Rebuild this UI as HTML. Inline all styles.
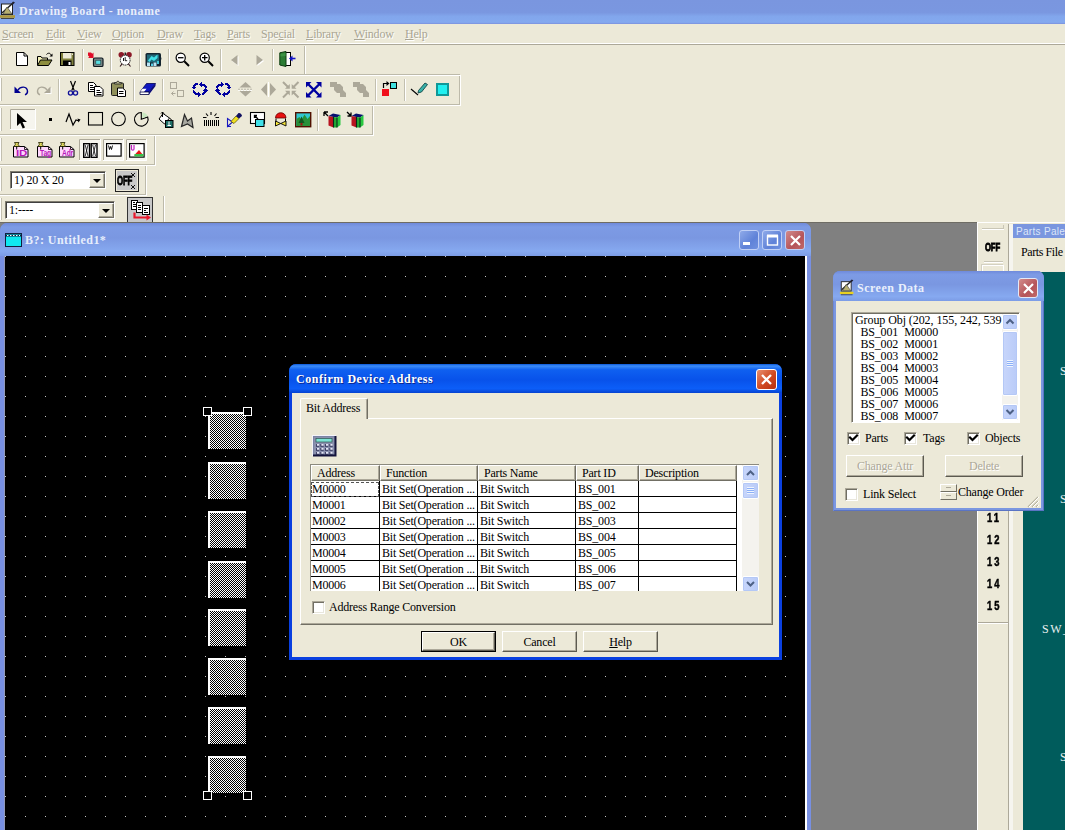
<!DOCTYPE html>
<html><head><meta charset="utf-8">
<style>
*{box-sizing:border-box;margin:0;padding:0}
html,body{width:1065px;height:830px;overflow:hidden;background:#ECE9D8;font-family:"Liberation Serif",serif;font-size:12px;color:#000;letter-spacing:-.2px}
.a{position:absolute}
#title{left:0;top:0;width:1065px;height:24px;background:linear-gradient(#7A96DF 0%,#7A97E0 52%,#82A6EC 68%,#84A9EF 93%,#7C90DC 100%)}
#title span{position:absolute;left:19px;top:4px;font-weight:bold;font-size:12px;color:#E8EEFB;letter-spacing:.5px;white-space:nowrap}
#menu{left:0;top:24px;width:1065px;height:20px;background:#ECE9D8}
#menu span{position:absolute;top:3px;font-size:12px;color:#A9A593;text-shadow:1px 1px 0 #fff;white-space:nowrap}
#menu u{text-decoration-thickness:1px;text-underline-offset:1px}
.tb{background:#ECE9D8;border-right:1px solid #C5C2B2;border-bottom:1px solid #C5C2B2;box-shadow:1px 1px 0 #fff}
.grip{position:absolute;left:0;top:2px;width:2px;bottom:3px;border-left:1px solid #fff;border-right:1px solid #ACA899}
.sep{position:absolute;width:2px;border-left:1px solid #ACA899;border-right:1px solid #fff}
.ic{position:absolute;width:16px;height:16px}
.combo{background:#fff;border:1px solid #7F7C6F;border-right-color:#fff;border-bottom-color:#fff;box-shadow:inset 1px 1px 0 #404040}
.cbtn{position:absolute;right:0;top:1px;bottom:0;width:16px;background:#ECE9D8;border:1px solid #fff;border-right-color:#716F64;border-bottom-color:#716F64;box-shadow:inset -1px -1px 0 #ACA899}
.cbtn:after{content:"";position:absolute;left:3px;top:5px;border:4px solid transparent;border-top:4px solid #000;border-bottom:0}
#mdi{left:0;top:222px;width:978px;height:608px;background:#808080;box-shadow:inset 0 1px 0 #6E6C64}
#child{left:0;top:223px;width:811px;height:607px;overflow:hidden;background:#7890E2;border-radius:7px 7px 0 0}
#ctitle{left:0;top:0;width:811px;height:33px;border-radius:7px 7px 0 0;background:linear-gradient(#6F8ADB 0,#7D9BE5 12%,#7A97E1 45%,#86A9F0 85%,#7C9CE6 100%)}
#ctitle span{position:absolute;left:25px;top:10px;font-weight:bold;font-size:12px;color:#E6EEFC;letter-spacing:.45px;white-space:nowrap}
#canvas{left:5px;top:33px;width:800px;height:600px;background-color:#000;
background-image:radial-gradient(circle at 0.5px 0.5px,#c4c4c4 0,#c4c4c4 0.5px,transparent 1px);background-size:20px 20px;background-position:0px 0px}
.cond{font-family:"Liberation Sans",sans-serif;font-weight:bold;font-size:12px;transform:scaleX(.78);transform-origin:0 0;-webkit-text-stroke:.5px #000;white-space:nowrap}
.num{letter-spacing:2.500px}
.wbtn{position:absolute;width:20px;height:20px;border-radius:3px;border:1px solid #C0D0F6}
.blueb{background:linear-gradient(135deg,#8FAAE9,#5F82D8 60%,#6F91E0)}
.redb{background:linear-gradient(135deg,#D28B8B,#B5545A 60%,#C06868)}
.box{position:absolute;width:38px;height:37px;border-left:2px solid #fff;border-top:2px solid #fff;
background-image:conic-gradient(#fff 25%,#000 0 50%,#fff 0 75%,#000 0);background-size:2px 2px;background-color:#888}
.hdl{position:absolute;width:9px;height:9px;border:1px solid #fff;background:#000}

.lb{font-size:12px;white-space:nowrap}
.chk{position:absolute;width:13px;height:13px;background:#fff;border:1px solid #ACA899;border-right-color:#fff;border-bottom-color:#fff;box-shadow:inset 1px 1px 0 #716F64,inset -1px -1px 0 #E8E6DC}
.btn{position:absolute;background:#ECE9D8;border:1px solid #fff;border-right-color:#5C5A50;border-bottom-color:#5C5A50;box-shadow:inset -1px -1px 0 #ACA899;font-size:12px;text-align:center}
.btn span{position:absolute;left:0;right:0;top:3px}
.btn.dis{color:#ACA899;text-shadow:1px 1px 0 #fff}
.btn.def{outline:1px solid #000}
.btn.def span{top:2px}
.sbar{position:absolute;background:#F4F3EE}
.sbtn{position:absolute;left:0;width:16px;height:16px;background:linear-gradient(90deg,#C8D6FB,#B9CBF8);border:1px solid #fff;border-radius:2px;box-shadow:inset 0 0 0 1px #B4C8F6}
.sbtn svg{position:absolute;left:0;top:0}
.sthumb{position:absolute;left:0;width:16px;background:linear-gradient(90deg,#C8D6FB,#B9CBF8);border:1px solid #fff;border-radius:2px;box-shadow:inset 0 0 0 1px #B4C8F6}
.sthumb i{position:absolute;left:4px;right:4px;top:50%;margin-top:-4px;height:7px;background:repeating-linear-gradient(#EEF4FE 0 1px,#8CB0F8 1px 2px)}
.hc{position:absolute;top:0;height:16px;background:#ECE9D8;border:1px solid #fff;border-right-color:#716F64;border-bottom-color:#716F64;box-shadow:inset -1px -1px 0 #ACA899;font-size:12px}
.hc span{position:absolute;left:5px;top:0px;white-space:nowrap}
.rw{position:absolute;left:0;width:426px;height:16px;border-bottom:1px solid #000;font-size:12px}
.rw span{position:absolute;top:1px;white-space:nowrap}
</style></head><body>
<div class="a" id="title"><span>Drawing Board - noname</span></div>
<div class="a" id="menu">
<span style="left:2px"><u>S</u>creen</span><span style="left:46px"><u>E</u>dit</span><span style="left:77px"><u>V</u>iew</span><span style="left:112px"><u>O</u>ption</span><span style="left:157px"><u>D</u>raw</span><span style="left:194px"><u>T</u>ags</span><span style="left:227px"><u>P</u>arts</span><span style="left:261px">Spe<u>c</u>ial</span><span style="left:306px"><u>L</u>ibrary</span><span style="left:354px"><u>W</u>indow</span><span style="left:405px"><u>H</u>elp</span>
</div>
<div class="a" style="left:0;top:43px;width:1065px;height:2px;border-top:1px solid #fff;border-bottom:1px solid #ACA899"></div>
<svg class="a" style="left:0;top:0" width="480" height="226" viewBox="0 0 480 226"><path d="M0 74.5h305" stroke="#BDBAAA"/><path d="M0 75.5h306" stroke="#fff"/><path d="M304.5 46v29" stroke="#BDBAAA"/><path d="M305.5 46v30" stroke="#fff"/><path d="M.5 48v23" stroke="#fff"/><path d="M1.500 48v23" stroke="#C2BFAF"/><g transform="translate(16,52)"><path d="M.5 .5h7.5l3.5 3.5v9.5h-11z" fill="#fff" stroke="#000"/><path d="M8 .5v3.5h3.5" fill="none" stroke="#000"/></g><g transform="translate(37,52)"><path d="M.5 13v-8.5h3.5l1 1.5h5.5v2" fill="#F4F1B8" stroke="#000"/><path d="M.5 13.5l3-5.5h11.5l-3.5 5.5z" fill="#8E8E3E" stroke="#000"/><path d="M9.5 2.500c1.500-2 4-1.500 4.500 .5" stroke="#000" fill="none"/><path d="M15.500 1.500v3h-3z" fill="#000"/></g><g transform="translate(60,52)"><rect x=".5" y=".5" width="13.500" height="13" fill="#80803E" stroke="#000"/><rect x="3" y="1" width="8.500" height="5.500" fill="#ECE9D8"/><rect x="3" y="8.500" width="8.500" height="5" fill="#000"/><rect x="8.500" y="10" width="2" height="3" fill="#fff"/><rect x="12" y="1.500" width="1" height="1.500" fill="#ECE9D8"/></g><g transform="translate(88,52)"><path d="M0 .5h3l1.300 1.300L5.500 .5v5.500h-5.500l1.300-1.300L0 3.500z" fill="#E00C28"/><rect x="5.500" y="6" width="9.500" height="8.500" rx="1.300" fill="#788888" stroke="#101820" stroke-width="1.200"/><rect x="7.800" y="8.200" width="5" height="4" fill="#58E0E4" stroke="#203838" stroke-width=".6"/></g><g transform="translate(117,51)"><circle cx="4.300" cy="3.800" r="2.800" fill="#8C1828"/><circle cx="12" cy="3.800" r="2.800" fill="#8C1828"/><circle cx="8.200" cy="9.200" r="4.900" fill="#fff" stroke="#222" stroke-width="1" stroke-dasharray="1.500 .6"/><path d="M8.200 6.200v3.500h2M6.500 7v3" stroke="#000" fill="none" stroke-width=".9"/><path d="M3 15.500l2.300-2.800M13.500 15.500l-2.300-2.800" stroke="#301018" fill="none" stroke-width="1.100"/><path d="M7.500 1.500h1.500v2.500h-1.500z" fill="#222"/></g><g transform="translate(145,52)"><rect x=".5" y="1" width="15.500" height="13.500" rx="1.500" fill="#142430"/><rect x="2" y="2.500" width="12" height="8" fill="#206878"/><path d="M3 8.500l3.500-4.500 2.500 1.500 3.500-3v3.500l-3.500 3-2.500-1.500-2 2.500z" fill="#40E0E8"/><path d="M14.500 4.500c1.800 0 1.800 4 0 4" stroke="#142430" stroke-width="1.200" fill="none"/><rect x="2" y="10.500" width="3" height="3.500" fill="#B8E4F4"/><rect x="6" y="11.500" width="2" height="2.500" fill="#58D0E8"/><rect x="8.500" y="10.500" width="3" height="3.500" fill="#B8E4F4"/><rect x="12" y="9" width="2" height="3" fill="#40C8D8"/></g><g transform="translate(175,52)"><circle cx="5.700" cy="5.700" r="4.600" fill="#fff" stroke="#000" stroke-width="1.200"/><path d="M3 5.700h5.500" stroke="#000" stroke-width="1.300"/><path d="M9.300 9.300l4.700 4.700" stroke="#000" stroke-width="2"/></g><g transform="translate(199,52)"><circle cx="5.700" cy="5.700" r="4.600" fill="#fff" stroke="#000" stroke-width="1.200"/><path d="M3 5.700h5.500M5.700 3v5.500" stroke="#000" stroke-width="1.300"/><path d="M9.300 9.300l4.700 4.700" stroke="#000" stroke-width="2"/></g><g transform="translate(229,53)"><path d="M8.500 2v10L2 7z" fill="#fff" transform="translate(1,1)"/><path d="M8.500 2v10L2 7z" fill="#ACA899"/></g><g transform="translate(256,53)"><path d="M.5 2v10L7 7z" fill="#fff" transform="translate(1,1)"/><path d="M.5 2v10L7 7z" fill="#ACA899"/></g><g transform="translate(279,51)"><rect x="5.500" y="1.500" width="6" height="13" fill="#fff" stroke="#000"/><path d="M.8 1.800l6.200-1.300v15l-6.200-1.500z" fill="#2C7C34" stroke="#0c3c10"/><path d="M1.500 3l5-1v3l-5 .5z" fill="#3c9444"/><path d="M16.500 7.500h-4.500" stroke="#1414C8" stroke-width="1.600"/><path d="M13.500 4.500l-3.500 3 3.500 3z" fill="#1414C8"/></g><path d="M82.5 49v22" stroke="#C2BFAF"/><path d="M83.5 49v22" stroke="#fff"/><path d="M110.5 49v22" stroke="#C2BFAF"/><path d="M111.5 49v22" stroke="#fff"/><path d="M139.5 49v22" stroke="#C2BFAF"/><path d="M140.5 49v22" stroke="#fff"/><path d="M168.5 49v22" stroke="#C2BFAF"/><path d="M169.5 49v22" stroke="#fff"/><path d="M220.5 49v22" stroke="#C2BFAF"/><path d="M221.5 49v22" stroke="#fff"/><path d="M272.5 49v22" stroke="#C2BFAF"/><path d="M273.5 49v22" stroke="#fff"/><path d="M0 104.5h460" stroke="#BDBAAA"/><path d="M0 105.5h461" stroke="#fff"/><path d="M459.5 76v29" stroke="#BDBAAA"/><path d="M460.5 76v30" stroke="#fff"/><path d="M.5 78v23" stroke="#fff"/><path d="M1.500 78v23" stroke="#C2BFAF"/><path d="M305 74.500h155" stroke="#BDBAAA"/><path d="M306 75.500h155" stroke="#fff"/><g transform="translate(14,84)"><path d="M.5 2.500v6.500h6.500z" fill="#000090"/><path d="M4 6c2.500-4 9-4 9.500 1 .2 2-1 3.200-2.500 3.800" stroke="#000090" stroke-width="1.400" fill="none"/></g><g transform="translate(37,84)"><g transform="translate(14,0) scale(-1,1)"><path d="M.5 2.500v6.500h6.500z" fill="#fff" transform="translate(-1,1)"/><path d="M.5 2.500v6.500h6.500z" fill="#ACA899"/><path d="M4 6c2.500-4 9-4 9.500 1 .2 2-1 3.200-2.500 3.800" stroke="#ACA899" stroke-width="1.400" fill="none"/></g></g><g transform="translate(68,81)"><path d="M2.500 0l3.700 9.500M7.500 0l-3.700 9.500" stroke="#000" stroke-width="1.200" fill="none"/><circle cx="2.500" cy="12" r="2.100" fill="none" stroke="#101098" stroke-width="1.300"/><circle cx="7.500" cy="12" r="2.100" fill="none" stroke="#101098" stroke-width="1.300"/></g><g transform="translate(88,82)"><path d="M.5 .5h5l2.500 2.500v6.500h-7.500z" fill="#fff" stroke="#000"/><path d="M2 3.500h3M2 5.500h4.500M2 7.500h4.500" stroke="#000"/><path d="M6.500 4.500h5.500l3 3v6.500h-8.500z" fill="#fff" stroke="#000"/><path d="M8.500 8.500h3.500M8.500 10.500h5M8.500 12.500h5" stroke="#000"/></g><g transform="translate(111,81)"><rect x=".5" y="2" width="12" height="12.500" rx="1" fill="#90905a" stroke="#222"/><path d="M3.500 3v-1.500h2l.7-1.200h1.400l.7 1.200h2v1.500z" fill="#b8b890" stroke="#222" stroke-width=".8"/><path d="M6.500 7h5l3 2.500v6h-8z" fill="#fff" stroke="#000"/><path d="M8 10.500h4.500M8 12.500h4.500" stroke="#000"/></g><g transform="translate(140,83)"><path d="M6.500 .5h9l-6.500 8.500h-9z" fill="#1018C0" stroke="#000050" stroke-width=".8"/><path d="M0 9l2.500-3.300h4l-2.500 3.300z" fill="#fff"/><path d="M0 9h9v2.500h-9z" fill="#fff" stroke="#000040" stroke-width=".8"/><path d="M9 11.500l6.500-8.500v-2.500l-6.500 8.500z" fill="#080878"/></g><g transform="translate(170,82)"><rect x=".5" y=".5" width="6" height="6" fill="none" stroke="#ACA899"/><rect x="7.500" y="8.500" width="6" height="6" fill="none" stroke="#ACA899"/><path d="M5.500 11.500h-4M3.500 9.500l-2 2 2 2" fill="none" stroke="#ACA899"/></g><g transform="translate(192,82)"><path d="M9 0h1v1h-1zM3 1h3v1h-3zM8 1h2v1h-2zM2 2h4v1h-4zM7 2h6v1h-6zM1 3h3v1h-3zM8 3h6v1h-6zM1 4h2v1h-2zM9 4h1v1h-1zM12 4h3v1h-3zM0 5h4v1h-4zM13 5h2v1h-2zM1 6h2v1h-2zM13 6h1v1h-1zM12 7h3v1h-3zM1 8h1v1h-1zM11 8h5v1h-5zM1 9h2v1h-2zM12 9h3v1h-3zM1 10h3v1h-3zM6 10h1v1h-1zM11 10h3v1h-3zM2 11h6v1h-6zM10 11h3v1h-3zM3 12h6v1h-6zM10 12h2v1h-2zM6 13h2v1h-2zM6 14h1v1h-1z" fill="#0000A0" shape-rendering="crispEdges"/></g><g transform="translate(215,82)"><g transform="translate(16,0) scale(-1,1)"><path d="M9 0h1v1h-1zM3 1h3v1h-3zM8 1h2v1h-2zM2 2h4v1h-4zM7 2h6v1h-6zM1 3h3v1h-3zM8 3h6v1h-6zM1 4h2v1h-2zM9 4h1v1h-1zM12 4h3v1h-3zM0 5h4v1h-4zM13 5h2v1h-2zM1 6h2v1h-2zM13 6h1v1h-1zM12 7h3v1h-3zM1 8h1v1h-1zM11 8h5v1h-5zM1 9h2v1h-2zM12 9h3v1h-3zM1 10h3v1h-3zM6 10h1v1h-1zM11 10h3v1h-3zM2 11h6v1h-6zM10 11h3v1h-3zM3 12h6v1h-6zM10 12h2v1h-2zM6 13h2v1h-2zM6 14h1v1h-1z" fill="#0000A0" shape-rendering="crispEdges"/></g></g><g transform="translate(238,82)"><path d="M7.500 0l6 5.500h-12z" fill="#ACA899"/><path d="M7.500 14.500l6-5.500h-12z" fill="#ACA899"/><path d="M0 7.300h15" stroke="#ACA899" stroke-dasharray="2 1"/><path d="M0 8.300h15" stroke="#fff" stroke-dasharray="2 1"/></g><g transform="translate(261,82)"><path d="M0 7.500l6-6.500v13z" fill="#ACA899"/><path d="M15 7.500l-6-6.500v13z" fill="#ACA899"/><path d="M7.500 0v15" stroke="#fff"/></g><g transform="translate(283,82)"><g stroke="#ACA899" stroke-width="2" fill="none"><path d="M0 0l5.500 5.500M15.500 0l-5.500 5.500M0 15.500l5.500-5.500M15.500 15.500l-5.500-5.500"/></g><g fill="#ACA899"><path d="M6.800 2v4.800h-4.800z"/><path d="M8.700 2v4.800h4.800z"/><path d="M6.800 13.500v-4.800h-4.800z"/><path d="M8.700 13.500v-4.800h4.800z"/></g></g><g transform="translate(306,82)"><g stroke="#0000A0" stroke-width="2.400" fill="none"><path d="M2 2l11.500 11.500M13.500 2l-11.500 11.500"/></g><g fill="#0000A0"><path d="M0 0h5.500l-5.500 5.500z"/><path d="M15.500 0h-5.500l5.500 5.500z"/><path d="M0 15.500h5.500l-5.500-5.500z"/><path d="M15.500 15.500h-5.500l5.500-5.500z"/></g></g><g transform="translate(330,82)"><path d="M0 0h7v2h3l3 3v3l3 3v4h-6v-4h-3l-3-3v-3h-4z" fill="#ACA899"/></g><g transform="translate(353,82)"><path d="M0 0h7v2h3l3 3v3l3 3v4h-6v-4h-3l-3-3v-3h-4z" fill="#ACA899"/></g><g transform="translate(382,81)"><rect x="0" y="8" width="7" height="7" fill="#F0101C"/><rect x="8.500" y="1.500" width="6" height="6" fill="#40E0E0" stroke="#000"/><path d="M1.500 7v-4.500h4" stroke="#000" stroke-width="1.200" fill="none"/><path d="M4.500 0l3 2.500-3 2.500z" fill="#000"/></g><g transform="translate(411,82)"><path d="M0 7l7 6" stroke="#000" stroke-width="1.100"/><path d="M7.500 8.500l6.500-7.500 2.500 1.500-6 7.500-3.500 1z" fill="#38B0A8" stroke="#104848" stroke-width=".9"/></g><g transform="translate(436,83)"><rect x="1" y="1" width="11" height="11" fill="#20F0F0" stroke="#109898" stroke-width="2"/></g><path d="M58.5 79v22" stroke="#C2BFAF"/><path d="M59.5 79v22" stroke="#fff"/><path d="M133.5 79v22" stroke="#C2BFAF"/><path d="M134.5 79v22" stroke="#fff"/><path d="M162.5 79v22" stroke="#C2BFAF"/><path d="M163.5 79v22" stroke="#fff"/><path d="M375.5 79v22" stroke="#C2BFAF"/><path d="M376.5 79v22" stroke="#fff"/><path d="M404.5 79v22" stroke="#C2BFAF"/><path d="M405.5 79v22" stroke="#fff"/><path d="M0 134.5h373" stroke="#BDBAAA"/><path d="M0 135.5h374" stroke="#fff"/><path d="M372.5 106v29" stroke="#BDBAAA"/><path d="M373.5 106v30" stroke="#fff"/><path d="M.5 108v23" stroke="#fff"/><path d="M1.500 108v23" stroke="#C2BFAF"/><rect x="10" y="109" width="26" height="21" fill="#F6F5EE"/><path d="M10.5 130v-20.5h25.5" fill="none" stroke="#ACA899"/><path d="M35.5 109v20.5h-25.5" fill="none" stroke="#fff"/><g transform="translate(17,113)"><path d="M0 0v13l3.200-3 2.500 5.500 2.300-1-2.500-5.500h4.500z" fill="#000"/></g><g transform="translate(49,118)"><rect x="0" y="0" width="3" height="3" fill="#000"/></g><g transform="translate(66,113)"><path d="M0 9l3-8 4 11 3-5 3 1" fill="none" stroke="#000" stroke-width="1.200"/><path d="M11.500 5.500l3 1-2 3z" fill="#000"/></g><g transform="translate(88,112)"><rect x=".5" y=".5" width="14" height="12.500" fill="none" stroke="#000" stroke-width="1.100"/></g><g transform="translate(111,112)"><circle cx="7.500" cy="7" r="6.800" fill="none" stroke="#000" stroke-width="1.100"/></g><g transform="translate(134,112)"><path d="M7.300 7.300v-6.800a6.800 6.800 0 1 0 6.400 4.500z" fill="none" stroke="#000" stroke-width="1.100"/><path d="M8.300 6.300v-5.800a6 6 0 0 1 5.400 3.500z" fill="#c8e8c0"/></g><g transform="translate(159,112)"><path d="M4 1.500l-4 5.500 5.500 5 5-6z" fill="#fff" stroke="#000"/><path d="M3.500 0v5M2 1.500l1.500-1.500 1.500 1.500" stroke="#000" fill="none"/><path d="M10.500 6c2 1 2.500 3 2.500 5" stroke="#000" fill="none"/><rect x="6.500" y="8.500" width="7.500" height="7" fill="#207068" stroke="#000"/><path d="M10 9.500v4M8.500 13.500h3.500" stroke="#fff"/></g><g transform="translate(180,113)"><path d="M1.500 13.500l3-12 3 6.500 4-3 1.500 9.500-5.500-3.500z" fill="#A8A8A0" stroke="#282828" stroke-width="1.200"/></g><g transform="translate(203,112)"><path d="M8 0v3M3 1.500l2 2.500M13.500 1.500l-2 2.500M0 5.500h3.500M12.500 5.500h3.500" stroke="#000" stroke-width="1.100"/><path d="M1.500 8v6M3.500 8v6M5.500 8v6M7.500 8v6M9.500 8v6M11.500 8v6M13.500 8v6M15.500 8v6" stroke="#000" stroke-width="1"/></g><g transform="translate(226,112)"><path d="M1.500 14.500v-8l5 3.500z" fill="none" stroke="#1818C0" stroke-width="1.100"/><path d="M1 14.500h4" stroke="#1818C0"/><path d="M5 9.500l5-5.500 3 2.500-5 5z" fill="#F0E020" stroke="#504800" stroke-width=".7"/><path d="M10 4l2.500-3c1.500-.5 3.500 1 3.500 3l-3 2.500z" fill="#101060"/></g><g transform="translate(250,112)"><rect x=".5" y=".5" width="14" height="11" fill="#fff" stroke="#000" stroke-width="1.100"/><rect x="5.500" y="7.500" width="8.500" height="7" fill="#40E0E8" stroke="#000"/><path d="M4.500 3.500l3.500 3.500M4.500 6v-2.500h2.500" stroke="#000" stroke-width="1.300" fill="none"/></g><g transform="translate(275,112)"><path d="M.5 6c0-7 10.500-7 10.500 0z" fill="#E81010" stroke="#600" stroke-width=".8"/><path d="M1 6.500v3M10.500 6.500v3" stroke="#000"/><path d="M.5 9l5.200 2.500-5.200 2.500zM11 9l-5.200 2.500 5.200 2.500z" fill="#F8E838" stroke="#000" stroke-width=".9"/></g><g transform="translate(295,112)"><rect x=".7" y=".7" width="15" height="14" fill="#30C8D0" stroke="#501000" stroke-width="1.400"/><path d="M1.500 14v-7l3-2 2 3 3-5.500 3 4.500 2.500-3v10z" fill="#289038"/><path d="M6.500 4.500l-3 6.500h6z" fill="#105820"/><rect x="5.500" y="11" width="2" height="2.500" fill="#a01010"/></g><g transform="translate(324,112)"><path d="M0 0h4M0 0v4M0 0l4 4" stroke="#000" stroke-width="1.300" fill="none"/><path d="M4.500 4l4.500-2.500 7.500 1.500-3.500 2.500-3.500-.5z" fill="#081070"/><path d="M4.500 4l5 1v10.500l-5-2z" fill="#B81420"/><path d="M9.500 5l3.500 .5v10h-3.500z" fill="#20A834"/><path d="M13 5.500l3.500-2.500v10l-3.500 2.500z" fill="#28C840"/><path d="M9.500 5v10.500M13 5.500v10" stroke="#082818" stroke-width="1.100"/></g><g transform="translate(347,112)"><path d="M0 0l4 4M4 .5v3.500h-3.500" stroke="#000" stroke-width="1.300" fill="none"/><path d="M4.500 4l4.500-2.500 7.500 1.500-3.500 2.500-3.500-.5z" fill="#081070"/><path d="M4.500 4l5 1v10.500l-5-2z" fill="#B81420"/><path d="M9.500 5l3.500 .5v10h-3.500z" fill="#20A834"/><path d="M13 5.500l3.500-2.500v10l-3.500 2.500z" fill="#28C840"/><path d="M9.500 5v10.500M13 5.500v10" stroke="#082818" stroke-width="1.100"/></g><path d="M317.5 109v22" stroke="#C2BFAF"/><path d="M318.5 109v22" stroke="#fff"/><path d="M0 164.5h155" stroke="#BDBAAA"/><path d="M0 165.5h156" stroke="#fff"/><path d="M154.5 136v29" stroke="#BDBAAA"/><path d="M155.5 136v30" stroke="#fff"/><path d="M.5 138v23" stroke="#fff"/><path d="M1.500 138v23" stroke="#C2BFAF"/><rect x="79" y="139" width="22" height="22" fill="#F6F5EE"/><path d="M79.5 161v-21.5h21.5" fill="none" stroke="#ACA899"/><path d="M100.5 139v21.5h-21.5" fill="none" stroke="#fff"/><rect x="103" y="139" width="21" height="22" fill="#F6F5EE"/><path d="M103.5 161v-21.5h20.5" fill="none" stroke="#ACA899"/><path d="M123.5 139v21.5h-20.5" fill="none" stroke="#fff"/><rect x="126" y="139" width="21" height="22" fill="#F6F5EE"/><path d="M126.5 161v-21.5h20.5" fill="none" stroke="#ACA899"/><path d="M146.5 139v21.5h-20.5" fill="none" stroke="#fff"/><g transform="translate(13,142)"><path d="M.5 4.500h11l3.500 3v7.500h-14.500z" fill="#FFD8FF" stroke="#000"/><path d="M11.500 4.500v3h3.500" fill="none" stroke="#000" stroke-width=".8"/><path d="M1.500 .5h4.500l-1 1.700 1.500 2.300h-5.500l1.500-2.300z" fill="#E0D860" stroke="#202000" stroke-width=".8"/><path d="M3.700 4.500v3" stroke="#000"/><text x="3" y="13.600" font-family="Liberation Sans" font-weight="bold" font-size="8.500" fill="#B818B8" textLength="11" lengthAdjust="spacingAndGlyphs">ID</text></g><g transform="translate(37,142)"><path d="M.5 4.500h11l3.500 3v7.500h-14.500z" fill="#FFD8FF" stroke="#000"/><path d="M11.500 4.500v3h3.500" fill="none" stroke="#000" stroke-width=".8"/><path d="M1.500 .5h4.500l-1 1.700 1.500 2.300h-5.500l1.500-2.300z" fill="#E0D860" stroke="#202000" stroke-width=".8"/><path d="M3.700 4.500v3" stroke="#000"/><text x="3" y="13.600" font-family="Liberation Sans" font-weight="bold" font-size="8.500" fill="#B818B8" textLength="11" lengthAdjust="spacingAndGlyphs">Tag</text></g><g transform="translate(59,142)"><path d="M.5 4.500h11l3.500 3v7.500h-14.500z" fill="#FFD8FF" stroke="#000"/><path d="M11.500 4.500v3h3.500" fill="none" stroke="#000" stroke-width=".8"/><path d="M1.500 .5h4.500l-1 1.700 1.500 2.300h-5.500l1.500-2.300z" fill="#E0D860" stroke="#202000" stroke-width=".8"/><path d="M3.700 4.500v3" stroke="#000"/><text x="3" y="13.600" font-family="Liberation Sans" font-weight="bold" font-size="8.500" fill="#B818B8" textLength="11" lengthAdjust="spacingAndGlyphs">Adr</text></g><g transform="translate(83,143)"><rect x=".7" y=".7" width="5.800" height="13.600" fill="#fff" stroke="#000" stroke-width="1.400"/><rect x="8.200" y=".7" width="5.800" height="13.600" fill="#fff" stroke="#000" stroke-width="1.400"/><path d="M2.200 2l2.800 11M5 2l-2.800 11M9.700 2l2.800 11M12.500 2l-2.800 11" stroke="#000" stroke-width=".8"/></g><g transform="translate(106,143)"><rect x=".6" y=".6" width="14.500" height="12.500" fill="#fff" stroke="#000" stroke-width="1.200"/><path d="M2.500 2.500l1 4 1-3 1 3 1-4" stroke="#000" stroke-width=".9" fill="none"/></g><g transform="translate(129,143)"><rect x=".6" y=".6" width="14.500" height="13.500" fill="#fff" stroke="#000" stroke-width="1.200"/><path d="M2.500 2v4c0 1.500 2.500 1.500 2.500 0v-4" stroke="#C020C0" stroke-width="1.200" fill="none"/><path d="M5 12.500l5-5.500 4.500 5.500z" fill="#E81818"/><rect x="5.500" y="11" width="9" height="2.500" fill="#38C048"/></g><path d="M0 194.5h146" stroke="#BDBAAA"/><path d="M0 195.5h147" stroke="#fff"/><path d="M145.5 166v29" stroke="#BDBAAA"/><path d="M146.5 166v30" stroke="#fff"/><path d="M.5 168v23" stroke="#fff"/><path d="M1.500 168v23" stroke="#C2BFAF"/><path d="M0 222.5h164" stroke="#BDBAAA"/><path d="M0 223.5h165" stroke="#fff"/><path d="M163.5 196v27" stroke="#BDBAAA"/><path d="M164.5 196v28" stroke="#fff"/><path d="M.5 198v22" stroke="#fff"/><path d="M1.500 198v22" stroke="#C2BFAF"/></svg><svg class="a" style="left:0;top:1px" width="18" height="20" viewBox="0 0 18 20"><rect x="1.500" y="3" width="11" height="10.500" fill="#fff" stroke="#222"/><path d="M2 12l11-10" stroke="#222" stroke-width="1.600"/><path d="M3 13l4-7 5 7z" fill="#b8b070" stroke="#444" stroke-width=".7"/><path d="M13 .5l2 1-2 2-1.500-1z" fill="#223"/><path d="M0 15.500h15" stroke="#b09838" stroke-width="2.600"/><path d="M1 17.500h13" stroke="#444" stroke-width="1"/></svg>
<div class="a combo" style="left:10px;top:171px;width:96px;height:18px"><span class="a" style="left:3px;top:1px;font-size:12px;white-space:nowrap">1) 20 X 20</span><div class="cbtn"></div></div>
<div class="a" style="left:115px;top:169px;width:24px;height:23px;border:1px solid #222;background:#ECE9D8"><div class="a" style="left:1px;top:1px;right:1px;bottom:1px;background:#C8C8C8"></div><span class="a" style="left:1px;top:4px;font-family:'Liberation Sans',sans-serif;font-weight:bold;font-size:12px;transform:scaleX(.66);transform-origin:0 0;letter-spacing:-.3px;-webkit-text-stroke:.8px #000">OFF</span><svg class="a" style="left:14px;top:2px" width="6" height="18"><path d="M1 1l2 2-2 2M5 1l-2 2 2 2M1 13l2 2-2 2M5 13l-2 2 2 2" stroke="#000" fill="none" stroke-width=".9"/></svg></div>
<div class="a combo" style="left:5px;top:201px;width:110px;height:18px"><span class="a" style="left:3px;top:1px;font-size:12px;white-space:nowrap">1:----</span><div class="cbtn"></div></div>
<div class="a" style="left:127px;top:197px;width:26px;height:26px;border:1px solid #333;background:#C8C8C8;overflow:hidden"><svg class="a" style="left:1px;top:0px" width="24" height="24" viewBox="0 0 24 24"><rect x="2.500" y="2.500" width="6" height="9" fill="#fff" stroke="#000"/><rect x="7.500" y="4.500" width="6" height="10" fill="#fff" stroke="#000"/><rect x="13.500" y="7.500" width="7" height="9" fill="#fff" stroke="#000"/><path d="M4 4.500h2M4 6.500h3M4 8.500h3M9 7.500h3M9 9.500h3M9 11.500h3M15 10.500h4M15 12.500h2M15 14.500h4" stroke="#000" stroke-width="1"/><path d="M5.500 14.500v5h13" stroke="#E8182C" stroke-width="2.200" fill="none"/><path d="M17.500 16.500l4.500 3-4.500 3z" fill="#E8182C"/></svg></div>

<div class="a" id="mdi"></div>
<div class="a" style="left:977px;top:222px;width:88px;height:608px;background:#ECE9D8"></div>
<div class="a" style="left:977px;top:222px;width:1px;height:608px;background:#fff"></div>
<div class="a" style="left:978px;top:222px;width:87px;height:1px;background:#fff"></div>
<div class="a" style="left:1008px;top:224px;width:1px;height:606px;background:#ACA899"></div>
<div class="a" style="left:1009px;top:224px;width:4px;height:606px;background:#F6F5EF"></div>
<div class="a" style="left:982px;top:228px;width:22px;height:1px;background:#C9C6B6;box-shadow:0 1px 0 #fff"></div>
<div class="a" style="left:1003px;top:225px;width:1px;height:4px;background:#C9C6B6"></div>
<div class="a" style="left:984px;top:261px;width:19px;height:1px;background:#C9C6B6;box-shadow:0 1px 0 #fff"></div>
<div class="a" style="left:982px;top:265px;width:22px;height:8px;border:1px solid #fff;border-bottom:0;box-shadow:-1px -1px 0 #D4D1C2"></div>
<span class="a cond" style="left:985px;top:241px;font-size:11px;transform:scaleX(.7);-webkit-text-stroke:.95px #000">OFF</span>
<span class="a cond num" style="left:987px;top:511px">11</span>
<span class="a cond num" style="left:987px;top:533px">12</span>
<span class="a cond num" style="left:987px;top:555px">13</span>
<span class="a cond num" style="left:987px;top:577px">14</span>
<span class="a cond num" style="left:987px;top:599px">15</span>
<div class="a" style="left:978px;top:622px;width:30px;height:1px;background:#ACA899;box-shadow:0 1px 0 #fff"></div>
<div class="a" style="left:1013px;top:224px;width:52px;height:14px;background:#7A96DF;overflow:hidden"><span class="a" style="left:3px;top:1.500px;font-family:'Liberation Sans',sans-serif;font-size:10px;color:#DCE6F8;white-space:nowrap;letter-spacing:.3px">Parts Palette</span></div>
<span class="a" style="left:1021px;top:245px;font-size:12px;white-space:nowrap;letter-spacing:-.4px">Parts File</span>
<div class="a" style="left:1023px;top:272px;width:42px;height:558px;background:#005C5C;overflow:hidden;color:#E8F0F0;font-size:12px;letter-spacing:1.500px">
<span class="a" style="left:37px;top:92px">S</span><span class="a" style="left:37px;top:220px">S</span><span class="a" style="left:19px;top:350px;white-space:nowrap">SW_1</span><span class="a" style="left:37px;top:478px">S</span></div>

<div class="a" id="child">
 <div class="a" id="ctitle"><span>B?: Untitled1*</span></div>
 <div class="a" id="canvas"><div class="box" style="left:203px;top:156px"></div><div class="box" style="left:203px;top:206px"></div><div class="box" style="left:203px;top:255px"></div><div class="box" style="left:203px;top:305px"></div><div class="box" style="left:203px;top:353px"></div><div class="box" style="left:203px;top:402px"></div><div class="box" style="left:203px;top:451px"></div><div class="box" style="left:203px;top:500px"></div><div class="hdl" style="left:198px;top:151px"></div><div class="hdl" style="left:238px;top:151px"></div><div class="hdl" style="left:198px;top:535px"></div><div class="hdl" style="left:238px;top:535px"></div></div>
<svg class="a" style="left:5px;top:10px" width="18" height="16"><rect x=".5" y=".5" width="16" height="13" fill="#10E8F0" stroke="#102040"/><path d="M1 2.500h15" stroke="#102040" stroke-width="2"/><path d="M2 2.500h13" stroke="#fff" stroke-dasharray="1.500 1.500"/></svg>
<div class="wbtn blueb" style="left:739px;top:7px"><svg width="19" height="19"><rect x="3" y="11" width="7" height="3" fill="#fff"/></svg></div>
<div class="wbtn blueb" style="left:762px;top:7px"><svg width="19" height="19"><rect x="4.500" y="5" width="10" height="9" fill="none" stroke="#fff" stroke-width="1.400"/><path d="M4 5h11" stroke="#fff" stroke-width="3"/></svg></div>
<div class="wbtn redb" style="left:785px;top:7px"><svg width="19" height="19"><path d="M5 5l9 9M14 5l-9 9" stroke="#fff" stroke-width="2.200"/></svg></div>
<div class="a" style="left:805px;top:33px;width:2px;height:600px;background:#fff"></div>
<div class="a" style="left:4px;top:33px;width:1px;height:600px;background:#9098B8"></div>

</div>
<div class="a" id="sd" style="left:833px;top:271px;width:211px;height:240px;border-radius:7px 7px 0 0;background:#7B97E0;overflow:hidden;box-shadow:inset -1px 0 0 #5A74C4,inset 1px 0 0 #6C88D8,inset 0 -1px 0 #5A74C4">
<div class="a" style="left:0;top:0;width:211px;height:30px;background:linear-gradient(#6F8ADB 0,#7D9BE5 12%,#7A97E1 45%,#86A9F0 85%,#7C9CE6 100%)"></div>
<div class="a" style="left:0;top:1px;width:211px;height:239px">
 <svg class="a" style="left:6px;top:7px" width="18" height="18" viewBox="0 0 18 20"><rect x="1.500" y="3" width="11" height="10.500" fill="#fff" stroke="#222"/><path d="M2 12l11-10" stroke="#222" stroke-width="1.600"/><path d="M3 13l4-7 5 7z" fill="#b8b070" stroke="#444" stroke-width=".7"/><path d="M13 .5l2 1-2 2-1.500-1z" fill="#223"/><path d="M0 15.500h15" stroke="#E8D020" stroke-width="2.600"/><path d="M1 17.500h13" stroke="#444" stroke-width="1"/></svg>
 <span class="a" style="left:24px;top:8.500px;font-weight:bold;font-size:12px;color:#EAF0FC;letter-spacing:.5px;white-space:nowrap">Screen Data</span>
 <div class="wbtn redb" style="left:185px;top:6px;border-color:#E4E8F6"><svg width="19" height="19"><path d="M5 5l9 9M14 5l-9 9" stroke="#fff" stroke-width="2.200"/></svg></div>
 <div class="a" style="left:3px;top:29px;width:205px;height:207px;background:#ECE9D8"></div>
 <div class="a" style="left:18px;top:40px;width:169px;height:111px;background:#fff;border:1px solid #ACA899;border-right-color:#fff;border-bottom-color:#fff;box-shadow:inset 1px 1px 0 #716F64;overflow:hidden;font-size:12px;line-height:12px;white-space:pre">
<div class="a" style="left:3px;top:1px;letter-spacing:-.08px">Group Obj (202, 155, 242, 539</div>
<div class="a" style="left:8.500px;top:12.500px;word-spacing:3.500px">BS_001 M0000
BS_002 M0001
BS_003 M0002
BS_004 M0003
BS_005 M0004
BS_006 M0005
BS_007 M0006
BS_008 M0007</div>
  <div class="a sbar" style="right:1px;top:1px;width:16px;bottom:2px">
   <div class="sbtn" style="top:0"><svg width="14" height="14"><path d="M3.500 8.500l3.500-3.500 3.500 3.500" stroke="#4D6185" stroke-width="2" fill="none"/></svg></div>
   <div class="sthumb" style="top:17px;height:65px"><i></i></div>
   <div class="sbtn" style="bottom:0"><svg width="14" height="14"><path d="M3.500 5l3.500 3.500 3.500-3.500" stroke="#4D6185" stroke-width="2" fill="none"/></svg></div>
  </div>
 </div>
 <div class="chk on" style="left:14px;top:160px"><svg width="11" height="11" style="position:absolute;left:0;top:0"><path d="M2 4.500l2.500 2.500 4.500-4.500" stroke="#000" stroke-width="2.200" fill="none" stroke-linecap="square" stroke-linejoin="miter"/></svg></div><span class="a lb" style="left:32px;top:159px">Parts</span>
 <div class="chk on" style="left:71px;top:160px"><svg width="11" height="11" style="position:absolute;left:0;top:0"><path d="M2 4.500l2.500 2.500 4.500-4.500" stroke="#000" stroke-width="2.200" fill="none" stroke-linecap="square" stroke-linejoin="miter"/></svg></div><span class="a lb" style="left:90px;top:159px">Tags</span>
 <div class="chk on" style="left:134px;top:160px"><svg width="11" height="11" style="position:absolute;left:0;top:0"><path d="M2 4.500l2.500 2.500 4.500-4.500" stroke="#000" stroke-width="2.200" fill="none" stroke-linecap="square" stroke-linejoin="miter"/></svg></div><span class="a lb" style="left:152px;top:159px">Objects</span>
 <div class="btn dis" style="left:13px;top:183px;width:78px;height:22px"><span>Change Attr</span></div>
 <div class="btn dis" style="left:112px;top:183px;width:78px;height:22px"><span>Delete</span></div>
 <div class="chk" style="left:12px;top:216px"></div><span class="a lb" style="left:30px;top:215px">Link Select</span>
 <div class="a" style="left:107px;top:212px;width:17px;height:8px;background:#ECE9D8;border:1px solid #fff;border-right-color:#716F64;border-bottom-color:#716F64"><div class="a" style="left:5px;top:2px;width:5px;height:1px;background:#ACA899"></div></div>
 <div class="a" style="left:107px;top:220px;width:17px;height:8px;background:#ECE9D8;border:1px solid #fff;border-right-color:#716F64;border-bottom-color:#716F64"><div class="a" style="left:5px;top:2px;width:5px;height:1px;background:#ACA899"></div></div>
 <span class="a lb" style="left:125px;top:213px">Change Order</span>
 <svg class="a" style="left:194px;top:224px" width="12" height="12"><path d="M11 1l-10 10M11 5l-6 6M11 9l-2 2" stroke="#B8B4A0" stroke-width="1.300"/><path d="M12 1l-10 10M12 5l-6 6M12 9l-2 2" stroke="#fff" stroke-width="1"/></svg>
</div></div>

<div class="a" id="dlg" style="left:289px;top:364px;width:493px;height:296px;border-radius:7px 7px 0 0;background:#0A40E0;overflow:hidden">
 <div class="a" style="left:0;top:0;width:493px;height:29px;background:linear-gradient(#0A58D8 0,#3C8CF8 7%,#0F60F0 20%,#0852EA 55%,#0C5EF8 85%,#0642D0 100%)"></div>
<div class="a" id="dl2" style="left:0;top:2px;width:492px;height:294px">
 <span class="a" style="left:7px;top:6px;font-weight:bold;font-size:12px;color:#fff;letter-spacing:.55px;white-space:nowrap;text-shadow:1px 1px 0 #0A2890">Confirm Device Address</span>
 <div class="wbtn" style="left:467px;top:3px;width:21px;height:21px;background:linear-gradient(135deg,#E89070,#D04820 55%,#B83010);border-color:#fff"><svg width="19" height="19"><path d="M5 5l9 9M14 5l-9 9" stroke="#fff" stroke-width="2.300"/></svg></div>
 <div class="a" style="left:3px;top:27px;width:487px;height:264px;background:#ECE9D8"></div>
 <!-- tab panel -->
 <div class="a" style="left:11px;top:52px;width:473px;height:207px;border:1px solid #fff;border-right-color:#716F64;border-bottom-color:#716F64;box-shadow:inset -1px -1px 0 #ACA899"></div>
 <div class="a" style="left:11px;top:32px;width:68px;height:21px;background:#ECE9D8;border:1px solid #fff;border-right-color:#716F64;border-bottom:0;border-radius:2px 2px 0 0;box-shadow:inset -1px 0 0 #ACA899"><span class="a lb" style="left:5px;top:2px">Bit Address</span></div>
 <!-- calc icon -->
 <svg class="a" style="left:23px;top:69px" width="25" height="22" viewBox="0 0 25 22"><rect x="0" y="0" width="24" height="21" fill="#F4F4FA"/><rect x="1" y="1" width="23.500" height="20.500" fill="#14143C"/><rect x="1" y="1" width="21.500" height="18.500" fill="#7C84A4"/><rect x="2" y="2" width="20" height="17" fill="#8A90AE"/><rect x="4" y="3.500" width="16" height="3.500" fill="#7CE4D4" stroke="#2C5850" stroke-width=".7"/><rect x="4" y="9" width="3.200" height="2.600" fill="#202048"/><rect x="4.8" y="9" width="2.400" height="1.800" fill="#E4E6F6"/><rect x="8.5" y="9" width="3.200" height="2.600" fill="#202048"/><rect x="9.3" y="9" width="2.400" height="1.800" fill="#E4E6F6"/><rect x="13" y="9" width="3.200" height="2.600" fill="#202048"/><rect x="13.8" y="9" width="2.400" height="1.800" fill="#E4E6F6"/><rect x="17.5" y="9" width="3.200" height="2.600" fill="#202048"/><rect x="18.3" y="9" width="2.400" height="1.800" fill="#E4E6F6"/><rect x="4" y="13" width="3.200" height="2.600" fill="#202048"/><rect x="4.8" y="13" width="2.400" height="1.800" fill="#E4E6F6"/><rect x="8.5" y="13" width="3.200" height="2.600" fill="#202048"/><rect x="9.3" y="13" width="2.400" height="1.800" fill="#E4E6F6"/><rect x="13" y="13" width="3.200" height="2.600" fill="#202048"/><rect x="13.8" y="13" width="2.400" height="1.800" fill="#E4E6F6"/><rect x="17.5" y="13" width="3.200" height="2.600" fill="#202048"/><rect x="18.3" y="13" width="2.400" height="1.800" fill="#E4E6F6"/><rect x="4" y="17" width="3.200" height="2.600" fill="#202048"/><rect x="4.8" y="17" width="2.400" height="1.800" fill="#E4E6F6"/><rect x="8.5" y="17" width="3.200" height="2.600" fill="#202048"/><rect x="9.3" y="17" width="2.400" height="1.800" fill="#E4E6F6"/><rect x="13" y="17" width="3.200" height="2.600" fill="#202048"/><rect x="13.8" y="17" width="2.400" height="1.800" fill="#E4E6F6"/><rect x="17.5" y="17" width="3.200" height="2.600" fill="#202048"/><rect x="18.3" y="17" width="2.400" height="1.800" fill="#E4E6F6"/></svg>
 <!-- grid -->
 <div class="a" id="grid" style="left:21px;top:98px;width:449px;height:127px;background:#fff;overflow:hidden;border-left:1px solid #8C8A7E;border-top:1px solid #8C8A7E">
  <div class="a" style="left:0;top:0;width:426px;height:16px;background:#ECE9D8"></div>
  <div class="hc" style="left:0;width:69px"><span>Address</span></div>
  <div class="hc" style="left:69px;width:98px"><span>Function</span></div>
  <div class="hc" style="left:167px;width:98px"><span>Parts Name</span></div>
  <div class="hc" style="left:265px;width:63px"><span>Part ID</span></div>
  <div class="hc" style="left:328px;width:98px"><span>Description</span></div>
  <div class="rw" style="top:16px"><span style="left:1px">M0000</span><span style="left:71px">Bit Set(Operation ...</span><span style="left:169px">Bit Switch</span><span style="left:267px">BS_001</span></div><div class="rw" style="top:32px"><span style="left:1px">M0001</span><span style="left:71px">Bit Set(Operation ...</span><span style="left:169px">Bit Switch</span><span style="left:267px">BS_002</span></div><div class="rw" style="top:48px"><span style="left:1px">M0002</span><span style="left:71px">Bit Set(Operation ...</span><span style="left:169px">Bit Switch</span><span style="left:267px">BS_003</span></div><div class="rw" style="top:64px"><span style="left:1px">M0003</span><span style="left:71px">Bit Set(Operation ...</span><span style="left:169px">Bit Switch</span><span style="left:267px">BS_004</span></div><div class="rw" style="top:80px"><span style="left:1px">M0004</span><span style="left:71px">Bit Set(Operation ...</span><span style="left:169px">Bit Switch</span><span style="left:267px">BS_005</span></div><div class="rw" style="top:96px"><span style="left:1px">M0005</span><span style="left:71px">Bit Set(Operation ...</span><span style="left:169px">Bit Switch</span><span style="left:267px">BS_006</span></div><div class="rw" style="top:112px"><span style="left:1px">M0006</span><span style="left:71px">Bit Set(Operation ...</span><span style="left:169px">Bit Switch</span><span style="left:267px">BS_007</span></div><div class="a" style="left:68px;top:16px;width:1px;height:112px;background:#000"></div><div class="a" style="left:166px;top:16px;width:1px;height:112px;background:#000"></div><div class="a" style="left:264px;top:16px;width:1px;height:112px;background:#000"></div><div class="a" style="left:327px;top:16px;width:1px;height:112px;background:#000"></div><div class="a" style="left:425px;top:16px;width:1px;height:112px;background:#000"></div><div class="a" style="left:0px;top:17px;width:68px;height:15px;border:1px dashed #555"></div>
  <div class="a sbar" style="left:431px;top:0;width:17px;height:127px">
   <div class="sbtn" style="top:0;height:16px;width:17px"><svg width="15" height="14"><path d="M4 9l3.500-3.500 3.500 3.500" stroke="#4D6185" stroke-width="2" fill="none"/></svg></div>
   <div class="sthumb" style="top:17px;height:17px;width:17px"><i></i></div>
   <div class="sbtn" style="bottom:0;height:16px;width:17px"><svg width="15" height="14"><path d="M4 5l3.500 3.500 3.500-3.500" stroke="#4D6185" stroke-width="2" fill="none"/></svg></div>
  </div>
 </div>
 <div class="chk" style="left:23px;top:235px"></div><span class="a lb" style="left:40px;top:234px">Address Range Conversion</span>
 <div class="btn def" style="left:133px;top:266px;width:73px;height:19px"><span>OK</span></div>
 <div class="btn" style="left:213px;top:265px;width:75px;height:21px"><span>Cancel</span></div>
 <div class="btn" style="left:294px;top:265px;width:75px;height:21px"><span><u>H</u>elp</span></div>
</div></div>

</body></html>
